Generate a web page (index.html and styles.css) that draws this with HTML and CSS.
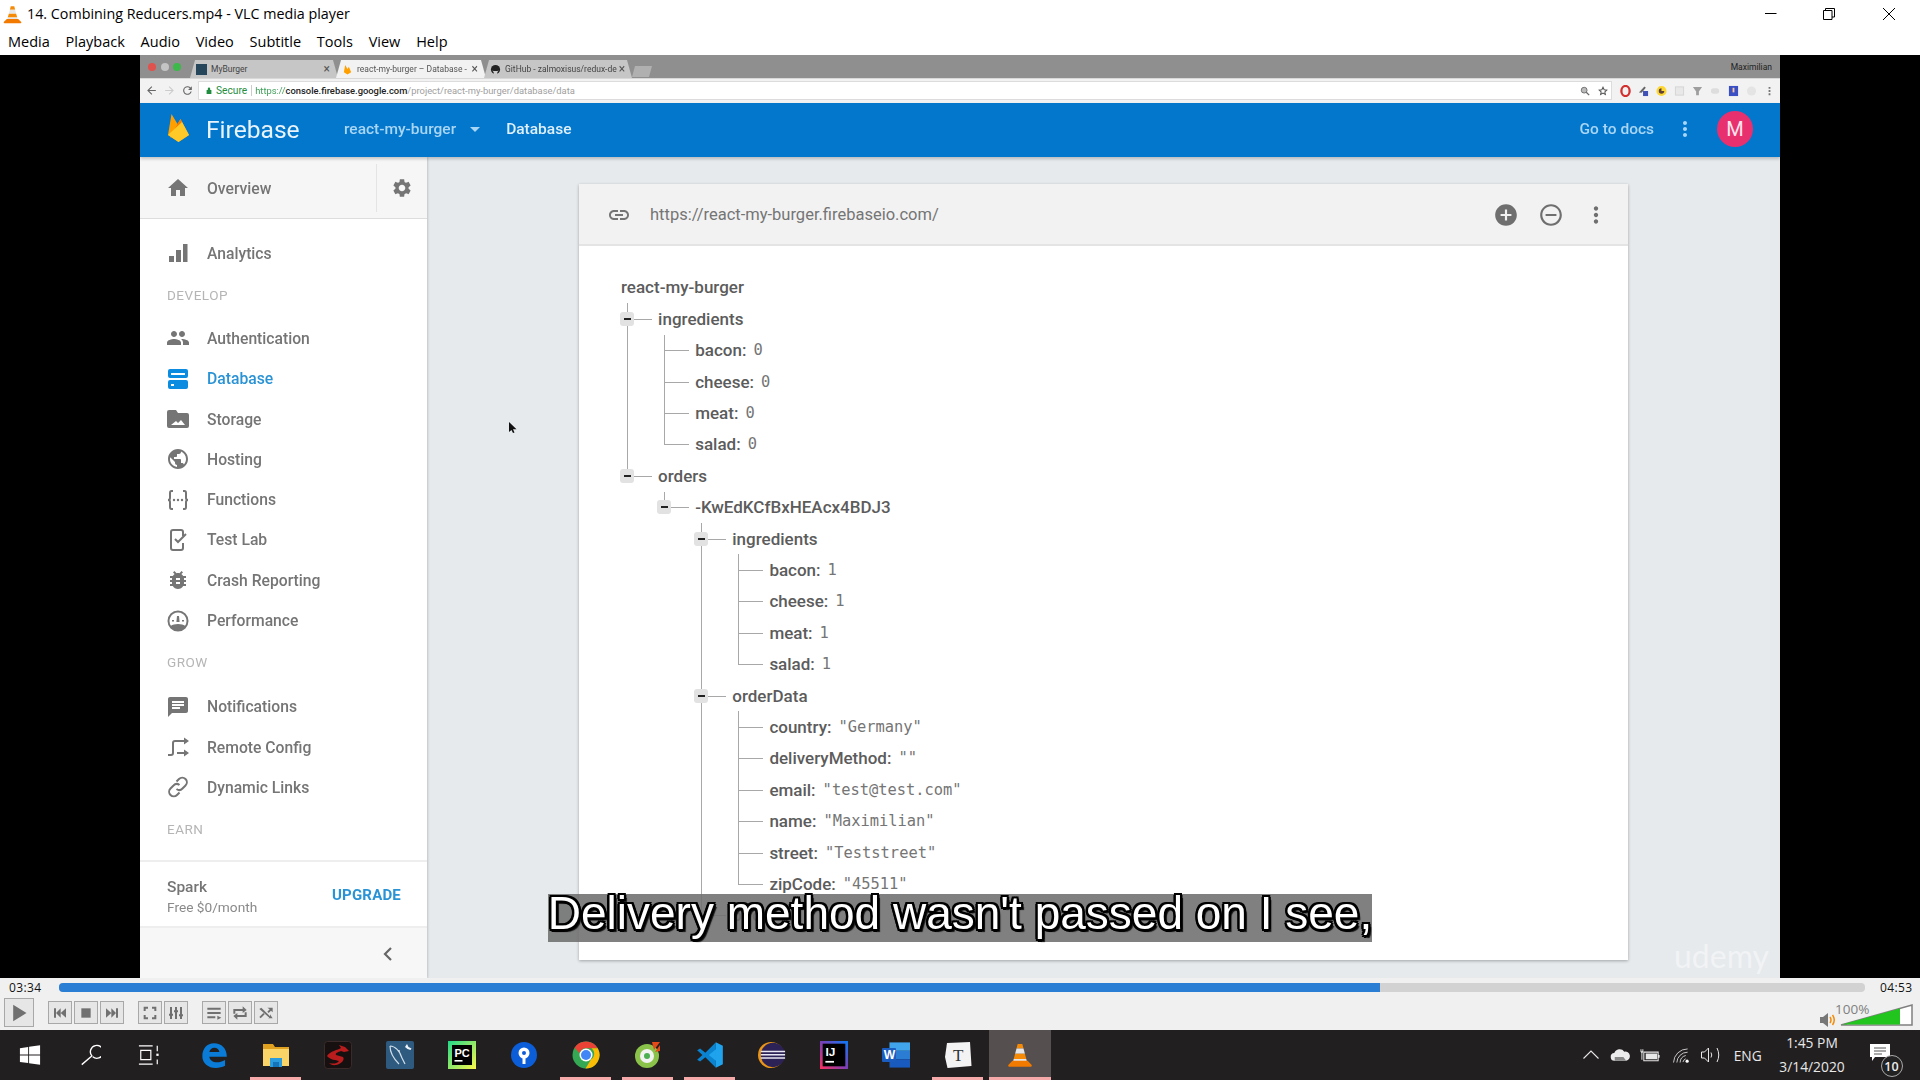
FILE: index.html
```html
<!DOCTYPE html>
<html lang="en">
<head>
<meta charset="utf-8">
<title>14. Combining Reducers.mp4 - VLC media player</title>
<link rel="stylesheet" href="styles.css">
</head>
<body>
<svg class="defs" width="0" height="0" aria-hidden="true">
  <symbol id="i-home" viewBox="0 0 24 24"><path d="M10 20v-6h4v6h5v-8h3L12 3 2 12h3v8z"/></symbol>
  <symbol id="i-gear" viewBox="0 0 24 24"><path d="M19.14 12.94c.04-.3.06-.61.06-.94 0-.32-.02-.64-.07-.94l2.03-1.58c.18-.14.23-.41.12-.61l-1.92-3.32c-.12-.22-.37-.29-.59-.22l-2.39.96c-.5-.38-1.03-.7-1.62-.94l-.36-2.54c-.04-.24-.24-.41-.48-.41h-3.84c-.24 0-.43.17-.47.41l-.36 2.54c-.59.24-1.13.57-1.62.94l-2.39-.96c-.22-.08-.47 0-.59.22L2.74 8.87c-.12.21-.08.47.12.61l2.03 1.58c-.05.3-.09.63-.09.94s.02.64.07.94l-2.03 1.58c-.18.14-.23.41-.12.61l1.92 3.32c.12.22.37.29.59.22l2.39-.96c.5.38 1.03.7 1.62.94l.36 2.54c.05.24.24.41.48.41h3.84c.24 0 .44-.17.47-.41l.36-2.54c.59-.24 1.13-.56 1.62-.94l2.39.96c.22.08.47 0 .59-.22l1.92-3.32c.12-.22.07-.47-.12-.61l-2.01-1.58zM12 15.6c-1.98 0-3.6-1.62-3.6-3.6s1.62-3.6 3.6-3.6 3.6 1.62 3.6 3.6-1.62 3.6-3.6 3.6z"/></symbol>
  <symbol id="i-bars" viewBox="0 0 24 24"><path d="M3 15h5v6H3zM10 9h5v12h-5zM17 3h4.500v18H17z"/></symbol>
  <symbol id="i-people" viewBox="0 0 24 24"><path d="M16 11c1.660 0 2.990-1.340 2.990-3S17.660 5 16 5c-1.660 0-3 1.340-3 3s1.340 3 3 3zm-8 0c1.660 0 2.990-1.340 2.990-3S9.660 5 8 5C6.340 5 5 6.340 5 8s1.340 3 3 3zm0 2c-2.330 0-7 1.170-7 3.500V19h14v-2.500c0-2.330-4.670-3.500-7-3.500zm8 0c-.29 0-.62.02-.97.05 1.160.84 1.970 1.970 1.970 3.450V19h6v-2.500c0-2.330-4.670-3.500-7-3.500z"/></symbol>
  <symbol id="i-db" viewBox="0 0 24 24"><path fill-rule="evenodd" d="M4 2h16a2 2 0 0 1 2 2v5a2 2 0 0 1-2 2H4a2 2 0 0 1-2-2V4a2 2 0 0 1 2-2zm1 4v2h14V6zM4 13h16a2 2 0 0 1 2 2v5a2 2 0 0 1-2 2H4a2 2 0 0 1-2-2v-5a2 2 0 0 1 2-2zm1 4v2h3v-2z"/></symbol>
  <symbol id="i-folder" viewBox="0 0 24 24"><path fill-rule="evenodd" d="M3 3h7l2 3h9a2 2 0 0 1 2 2v11a2 2 0 0 1-2 2H3a2 2 0 0 1-2-2V5a2 2 0 0 1 2-2zm2 15h14l-4-5-3 3-2-2z"/></symbol>
  <symbol id="i-globe" viewBox="0 0 24 24"><path d="M12 2C6.480 2 2 6.480 2 12s4.480 10 10 10 10-4.480 10-10S17.520 2 12 2zm-1 17.930c-3.950-.49-7-3.850-7-7.930 0-.62.08-1.210.21-1.790L9 15v1c0 1.100.9 2 2 2v1.930zm6.900-2.540c-.26-.81-1-1.390-1.900-1.390h-1v-3c0-.55-.45-1-1-1H8v-2h2c.55 0 1-.45 1-1V7h2c1.100 0 2-.9 2-2v-.41c2.930 1.190 5 4.060 5 7.410 0 2.080-.8 3.970-2.100 5.390z"/></symbol>
  <symbol id="i-fn" viewBox="0 0 24 24"><path fill="none" stroke="currentColor" stroke-width="2" d="M7 3H5.500Q4 3 4 5v5q0 2-2 2 2 0 2 2v5q0 2 1.500 2H7M17 3h1.500Q20 3 20 5v5q0 2 2 2-2 0-2 2v5q0 2-1.500 2H17"/><circle cx="8" cy="12" r="1.200"/><circle cx="12" cy="12" r="1.200"/><circle cx="16" cy="12" r="1.200"/></symbol>
  <symbol id="i-lab" viewBox="0 0 24 24"><path fill="none" stroke="currentColor" stroke-width="2" d="M17 8V4a2 2 0 0 0-2-2H7a2 2 0 0 0-2 2v16a2 2 0 0 0 2 2h8a2 2 0 0 0 2-2v-5M9 11l3 3 8-8"/></symbol>
  <symbol id="i-bug" viewBox="0 0 24 24"><path d="M20 8h-2.810c-.45-.78-1.070-1.450-1.820-1.960L17 4.410 15.590 3l-2.170 2.170C12.960 5.060 12.490 5 12 5c-.49 0-.96.06-1.410.17L8.410 3 7 4.410l1.620 1.630C7.880 6.550 7.260 7.220 6.810 8H4v2h2.090c-.05.33-.09.66-.09 1v1H4v2h2v1c0 .34.04.67.09 1H4v2h2.810c1.040 1.790 2.970 3 5.190 3s4.150-1.210 5.190-3H20v-2h-2.090c.05-.33.09-.66.09-1v-1h2v-2h-2v-1c0-.34-.04-.67-.09-1H20V8zm-6 8h-4v-2h4v2zm0-4h-4v-2h4v2z"/></symbol>
  <symbol id="i-gauge" viewBox="0 0 24 24"><path fill-rule="evenodd" d="M12 1.500a10.500 10.500 0 1 0 0 21 10.500 10.500 0 0 0 0-21zm0 2a8.500 8.500 0 0 1 7 13.300c-1.500-1-4-1.800-7-1.800s-5.500.8-7 1.800a8.500 8.500 0 0 1 7-13.300z"/><path d="M11 7h2l.6 6h-3.200zM6 11h2v1.500H6zM16 11h2v1.500h-2z"/></symbol>
  <symbol id="i-chat" viewBox="0 0 24 24"><path d="M20 2H4c-1.100 0-1.990.9-1.990 2L2 22l4-4h14c1.100 0 2-.9 2-2V4c0-1.100-.9-2-2-2zM6 9h12v2H6V9zm8 5H6v-2h8v2zm4-6H6V6h12v2z"/></symbol>
  <symbol id="i-remote" viewBox="0 0 24 24"><path fill="none" stroke="currentColor" stroke-width="2" d="M2 20h3q2 0 2-2V8q0-2 2-2h10M11 18h9"/><path d="M18 2.500 23 6l-5 3.500zM18 14.500l5 3.500-5 3.500z"/></symbol>
  <symbol id="i-chain" viewBox="0 0 24 24"><path fill="none" stroke="currentColor" stroke-width="2" d="M10.500 6.500 13 4a4.500 4.500 0 0 1 6.500 6.500l-3 3a4.500 4.500 0 0 1-6 .5M13.500 17.500 11 20a4.500 4.500 0 0 1-6.500-6.500l3-3a4.500 4.500 0 0 1 6-.5"/></symbol>
  <symbol id="i-link" viewBox="0 0 24 24"><path d="M3.900 12c0-1.710 1.390-3.100 3.100-3.100h4V7H7c-2.760 0-5 2.240-5 5s2.240 5 5 5h4v-1.900H7c-1.710 0-3.100-1.390-3.100-3.100zM8 13h8v-2H8v2zm9-6h-4v1.900h4c1.710 0 3.100 1.390 3.100 3.100s-1.390 3.100-3.100 3.100h-4V17h4c2.760 0 5-2.240 5-5s-2.240-5-5-5z"/></symbol>
  <symbol id="i-plus" viewBox="0 0 24 24"><path d="M12 2C6.480 2 2 6.480 2 12s4.480 10 10 10 10-4.480 10-10S17.520 2 12 2zm5 11h-4v4h-2v-4H7v-2h4V7h2v4h4v2z"/></symbol>
  <symbol id="i-minus" viewBox="0 0 24 24"><path d="M7 11v2h10v-2H7zm5-9C6.480 2 2 6.480 2 12s4.480 10 10 10 10-4.480 10-10S17.520 2 12 2zm0 18c-4.410 0-8-3.590-8-8s3.590-8 8-8 8 3.590 8 8-3.590 8-8 8z"/></symbol>
  <symbol id="i-more" viewBox="0 0 24 24"><path d="M12 8c1.100 0 2-.9 2-2s-.9-2-2-2-2 .9-2 2 .9 2 2 2zm0 2c-1.100 0-2 .9-2 2s.9 2 2 2 2-.9 2-2-.9-2-2-2zm0 6c-1.100 0-2 .9-2 2s.9 2 2 2 2-.9 2-2-.9-2-2-2z"/></symbol>
  <symbol id="i-vlc" viewBox="0 0 24 24"><path fill="#f58a07" d="M10 2.500h4l1 4H9z"/><path fill="#e6e6e6" d="M9 6.500h6l1.200 4.500H7.800z"/><path fill="#f58a07" d="M7.800 11h8.400l1.200 4.500H6.600z"/><path fill="#e6e6e6" d="M6.600 15.500h10.800l.5 2H6.100z"/><path fill="#f27a00" d="M5.500 17h13l3.500 3.500q.5 1.500-1 1.500H3q-1.500 0-1-1.500z"/></symbol>
</svg>

<header class="titlebar">
  <svg class="title-icon"><use href="#i-vlc"/></svg>
  <span class="title-text">14. Combining Reducers.mp4 - VLC media player</span>
  <div class="winctl">
    <svg class="wc" viewBox="0 0 12 12"><path d="M0 5.500h11.500" stroke="#000" fill="none"/></svg>
    <svg class="wc" viewBox="0 0 12 12"><path d="M.5 2.500h8.500v9H.5zM2.500 2.500V.5h9v8.500H9" stroke="#000" fill="none"/></svg>
    <svg class="wc" viewBox="0 0 12 12"><path d="M0 0l12 12M12 0L0 12" stroke="#000" fill="none"/></svg>
  </div>
</header>
<nav class="menubar">
  <span>Media</span><span>Playback</span><span>Audio</span><span>Video</span><span>Subtitle</span><span>Tools</span><span>View</span><span>Help</span>
</nav>

<main class="video">
  <div class="frame">
    <div class="screen">
      <div class="tabbar">
        <div class="dots"><i class="dot red"></i><i class="dot grey"></i><i class="dot green"></i></div>
        <div class="tab tab-a"><i class="fav-burger"></i><span class="tab-label">MyBurger</span><span class="tab-x">×</span></div>
        <div class="tab tab-active"><svg class="fav" viewBox="0 0 24 24"><path fill="#ffa000" d="M4 18 7 2l5 9 3-5 5 12-8 5z"/></svg><span class="tab-label">react-my-burger – Database -</span><span class="tab-x">×</span></div>
        <div class="tab tab-c"><svg class="fav" viewBox="0 0 24 24"><circle cx="12" cy="12" r="10" fill="#222"/><path fill="#ccc" d="M8 22v-4l-3-4 3 1 8 0 3-1-3 4v4z"/></svg><span class="tab-label">GitHub - zalmoxisus/redux-de</span><span class="tab-x">×</span></div>
        <div class="tab-new"></div>
        <span class="profile">Maximilian</span>
      </div>
      <div class="toolbar">
        <svg class="nav-ic" viewBox="0 0 24 24"><path d="M20 11H7.800l5.600-5.600L12 4l-8 8 8 8 1.400-1.400L7.800 13H20z"/></svg>
        <svg class="nav-ic nav-off" viewBox="0 0 24 24"><path d="M4 11h12.200l-5.600-5.600L12 4l8 8-8 8-1.400-1.400 5.600-5.600H4z"/></svg>
        <svg class="nav-ic" viewBox="0 0 24 24"><path d="M17.650 6.350A8 8 0 1 0 19.730 14h-2.080A6 6 0 1 1 12 6c1.660 0 3.140.69 4.220 1.780L13 11h7V4z"/></svg>
        <div class="omni">
          <svg class="lock" viewBox="0 0 10 12"><path d="M1 5h8v7H1zM3 5V3a2 2 0 0 1 4 0v2" fill="#1e8e3e"/></svg>
          <span class="secure">Secure</span><i class="omni-sep"></i>
          <span class="url-scheme">https://</span><span class="url-host">console.firebase.google.com</span><span class="url-path">/project/react-my-burger/database/data</span>
          <svg class="omni-ic omni-right" viewBox="0 0 24 24"><circle cx="10" cy="10" r="7" fill="#bbb" stroke="#666" stroke-width="2"/><path d="M15 15l7 7" stroke="#666" stroke-width="3"/></svg>
          <svg class="omni-ic" viewBox="0 0 24 24"><path fill="none" stroke="#555" stroke-width="2.500" d="M12 3l2.800 6 6.200.7-4.600 4.300 1.300 6.500L12 17l-5.700 3.500L7.600 14 3 9.700 9.200 9z"/></svg>
        </div>
        <div class="exts">
          <svg class="ext" viewBox="0 0 24 24"><ellipse cx="12" cy="12" rx="9" ry="11" fill="none" stroke="#d32f2f" stroke-width="5"/></svg>
          <svg class="ext" viewBox="0 0 24 24"><path fill="#666" d="M2 15 14 2l3 3L8 16z"/><rect x="11" y="12" width="11" height="11" fill="#3f51b5"/></svg>
          <svg class="ext" viewBox="0 0 24 24"><circle cx="12" cy="12" r="11" fill="#fdd835"/><path fill="#5d4037" d="M12 6a6 6 0 1 0 6 6h-6z"/></svg>
          <svg class="ext" viewBox="0 0 24 24"><rect x="3" y="3" width="18" height="18" fill="#e8e8e8" stroke="#d4d4d4" stroke-width="2"/></svg>
          <svg class="ext" viewBox="0 0 24 24"><path fill="#9e9e9e" d="M2 3h20l-7 10v8h-6v-8z"/></svg>
          <svg class="ext" viewBox="0 0 24 24"><rect x="2" y="6" width="18" height="12" rx="6" fill="#ddd"/></svg>
          <svg class="ext" viewBox="0 0 24 24"><rect x="2" y="1" width="20" height="22" fill="#3b4fc4"/><rect x="10" y="5" width="4" height="10" fill="#f5c6a0"/></svg>
          <svg class="ext" viewBox="0 0 24 24"><circle cx="12" cy="12" r="10" fill="#e4e4e4"/></svg>
          <svg class="ext" viewBox="0 0 24 24"><path fill="#777" d="M10 3h4v4h-4zM10 10h4v4h-4zM10 17h4v4h-4z"/></svg>
        </div>
      </div>

      <div class="fbbar">
        <svg class="fb-logo" viewBox="0 0 21 28"><path fill="#ffa000" d="M0 21 3.500 0 9.500 10 12.500 5 21 21 10.500 28z"/><path fill="#f57c00" d="M9.500 10 12.500 5 16 14 2 24z"/><path fill="#ffca28" d="M0 21 14 8 21 21 10.500 28z"/></svg>
        <span class="fb-name">Firebase</span>
        <span class="fb-project">react-my-burger</span>
        <i class="fb-caret"></i>
        <span class="fb-section">Database</span>
        <span class="fb-docs">Go to docs</span>
        <svg class="fb-more"><use href="#i-more"/></svg>
        <span class="avatar">M</span>
      </div>

      <div class="fbbody">
        <aside class="side">
          <div class="overview">
            <svg class="ic"><use href="#i-home"/></svg><span class="ov-label">Overview</span>
            <span class="ov-gear"><svg class="gear"><use href="#i-gear"/></svg></span>
          </div>
          <div class="navlist">
            <div class="item"><svg class="ic"><use href="#i-bars"/></svg>Analytics</div>
            <div class="sect sect-dev">DEVELOP</div>
            <div class="item"><svg class="ic"><use href="#i-people"/></svg>Authentication</div>
            <div class="item item-on"><svg class="ic"><use href="#i-db"/></svg>Database</div>
            <div class="item"><svg class="ic"><use href="#i-folder"/></svg>Storage</div>
            <div class="item"><svg class="ic"><use href="#i-globe"/></svg>Hosting</div>
            <div class="item"><svg class="ic"><use href="#i-fn"/></svg>Functions</div>
            <div class="item"><svg class="ic"><use href="#i-lab"/></svg>Test Lab</div>
            <div class="item"><svg class="ic"><use href="#i-bug"/></svg>Crash Reporting</div>
            <div class="item"><svg class="ic"><use href="#i-gauge"/></svg>Performance</div>
            <div class="sect sect-grow">GROW</div>
            <div class="item"><svg class="ic"><use href="#i-chat"/></svg>Notifications</div>
            <div class="item"><svg class="ic"><use href="#i-remote"/></svg>Remote Config</div>
            <div class="item"><svg class="ic"><use href="#i-chain"/></svg>Dynamic Links</div>
            <div class="sect sect-earn">EARN</div>
          </div>
          <div class="plan">
            <div class="plan-text"><span class="plan-name">Spark</span><span class="plan-price">Free $0/month</span></div>
            <span class="upgrade">UPGRADE</span>
          </div>
          <div class="collapse"><svg class="chev" viewBox="0 0 12 16"><path d="M9 2 3 8l6 6" fill="none" stroke="#666" stroke-width="2.200"/></svg></div>
        </aside>

        <section class="content">
          <div class="card">
            <div class="card-head">
              <svg class="ch-link"><use href="#i-link"/></svg>
              <span class="ch-url">https://react-my-burger.firebaseio.com/</span>
              <svg class="ch-ic ch-first"><use href="#i-plus"/></svg>
              <svg class="ch-ic"><use href="#i-minus"/></svg>
              <svg class="ch-ic"><use href="#i-more"/></svg>
            </div>
            <div class="card-body">
              <ul class="tree">
                <li class="root"><div class="row"><b>react-my-burger</b></div>
                  <ul>
                    <li><div class="row"><i class="tog"></i><b>ingredients</b></div>
                      <ul>
                        <li><div class="row"><b>bacon:</b><code>0</code></div></li>
                        <li><div class="row"><b>cheese:</b><code>0</code></div></li>
                        <li><div class="row"><b>meat:</b><code>0</code></div></li>
                        <li><div class="row"><b>salad:</b><code>0</code></div></li>
                      </ul>
                    </li>
                    <li><div class="row"><i class="tog"></i><b>orders</b></div>
                      <ul>
                        <li><div class="row"><i class="tog"></i><b>-KwEdKCfBxHEAcx4BDJ3</b></div>
                          <ul>
                            <li><div class="row"><i class="tog"></i><b>ingredients</b></div>
                              <ul>
                                <li><div class="row"><b>bacon:</b><code>1</code></div></li>
                                <li><div class="row"><b>cheese:</b><code>1</code></div></li>
                                <li><div class="row"><b>meat:</b><code>1</code></div></li>
                                <li><div class="row"><b>salad:</b><code>1</code></div></li>
                              </ul>
                            </li>
                            <li><div class="row"><i class="tog"></i><b>orderData</b></div>
                              <ul>
                                <li><div class="row"><b>country:</b><code>"Germany"</code></div></li>
                                <li><div class="row"><b>deliveryMethod:</b><code>""</code></div></li>
                                <li><div class="row"><b>email:</b><code>"test@test.com"</code></div></li>
                                <li><div class="row"><b>name:</b><code>"Maximilian"</code></div></li>
                                <li><div class="row"><b>street:</b><code>"Teststreet"</code></div></li>
                                <li><div class="row"><b>zipCode:</b><code>"45511"</code></div></li>
                              </ul>
                            </li>
                            <li><div class="row"><b>price:</b><code>4</code></div></li>
                          </ul>
                        </li>
                      </ul>
                    </li>
                  </ul>
                </li>
              </ul>
            </div>
          </div>
        </section>
      </div>
      <svg class="cursor" viewBox="0 0 8 12"><path d="M0 0v10l2.500-2L4 11l1.500-.6L4 7.300h3.500z" fill="#111"/></svg>
      <span class="watermark">udemy</span>
    </div>
    <div class="subtitle"><span>Delivery method wasn't passed on I see,</span></div>
  </div>
</main>

<div class="seek">
  <span class="time time-l">03:34</span>
  <div class="track"><div class="fill"></div></div>
  <span class="time time-r">04:53</span>
</div>

<div class="controls">
  <button class="btn btn-play"><svg viewBox="0 0 24 24"><path d="M5 2l16 10L5 22z"/></svg></button>
  <div class="grp">
    <button class="btn"><svg viewBox="0 0 24 24"><path d="M3 5h3v14H3zM13 5v14l-7-7zM21 5v14l-8-7z"/></svg></button>
    <button class="btn"><svg viewBox="0 0 24 24"><path d="M5 5h14v14H5z"/></svg></button>
    <button class="btn"><svg viewBox="0 0 24 24"><path d="M3 5v14l8-7zM11 5v14l7-7zM18 5h3v14h-3z"/></svg></button>
  </div>
  <div class="grp">
    <button class="btn"><svg viewBox="0 0 24 24"><path fill="none" stroke="#707070" stroke-width="3" d="M9 4H4v5M15 4h5v5M9 20H4v-5M15 20h5v-5"/></svg></button>
    <button class="btn"><svg viewBox="0 0 24 24"><path d="M3 3h3v18H3zM10.500 3h3v18h-3zM18 3h3v18h-3zM1.500 13h6v3h-6zM9 8h6v3H9zM16.500 14h6v3h-6z"/></svg></button>
  </div>
  <div class="grp">
    <button class="btn"><svg viewBox="0 0 24 24"><path d="M2 4h20v3H2zM2 10.500h20v3H2zM2 17h12v3H2zM17 16l6 3-6 3z"/></svg></button>
    <button class="btn"><svg viewBox="0 0 24 24"><path d="M2 13V6h14V2l6 5.500L16 12V9H5v4zM22 11v7H8v4l-6-5.500L8 12v3h11v-4z"/></svg></button>
    <button class="btn"><svg viewBox="0 0 24 24"><path d="M2 6l3-2 13 13v-3l4 6h-7l2-1L2 6zM14 4h8v7l-2.500-2.500-3.500 3.500-2-2 3.500-3.500zM2 18l6-6 2 2-6 6z"/></svg></button>
  </div>
  <div class="volume">
    <svg class="vol-ic" viewBox="0 0 16 16"><path fill="#777" d="M0 5h3l5-4v14l-5-4H0z"/><path fill="none" stroke="#f58a07" stroke-width="1.500" d="M10 5q2 3 0 6M12.500 3q3.500 5 0 10"/></svg>
    <svg class="vol-bar" viewBox="0 0 74 24">
      <path d="M1 22 72 2v20z" fill="#fff" stroke="#808080" stroke-width="1.500"/>
      <path d="M2 21.500 60 5.500v16z" fill="#22c41e"/>
      <text class="vol-text" x="-5" y="11">100%</text>
    </svg>
  </div>
</div>

<footer class="taskbar">
  <div class="sys sys-win"><svg viewBox="0 0 24 24"><path fill="#fff" d="M1 4.500l9-1.300V11.500H1zM11 3l12-1.700V11.500H11zM1 12.500h9v8.300l-9-1.300zM11 12.500h12V22.700L11 21z"/></svg></div>
  <div class="sys sys-search"><svg viewBox="0 0 24 24"><path fill="none" stroke="#fff" stroke-width="1.500" d="M15 14a7 7 0 1 0-1-1L3 22.500"/></svg></div>
  <div class="sys sys-view"><svg viewBox="0 0 24 24"><path fill="none" stroke="#fff" stroke-width="1.300" d="M1 2h15M1 22h15M3 7h11v10H3zM21 2v6M21 17v5"/><path fill="#fff" d="M20 10.500h2.500v2.500H20z"/></svg></div>
  <div class="apps">
    <div class="app"><svg viewBox="0 0 24 24"><path fill="#0a7bd6" d="M12 2c6.500 0 11 4.500 11 11.500H8c.3 3 3 4.800 6.500 4.800 2.300 0 4.500-.5 7-2v5c-2.400 1.300-5 1.800-8 1.800C7 23 2 19 2 13 2 6.500 6 2 12 2zm4.600 7.500c-.2-2.300-2-3.800-4.300-3.800-2.200 0-3.900 1.500-4.300 3.800z"/></svg></div>
    <div class="app app-on"><svg viewBox="0 0 28 28"><path fill="#e0a020" d="M1 3h10l2 3h14v6H1z"/><path fill="#fbd468" d="M1 8h26v17H1z"/><path fill="#2a9bdc" d="M8 17h12v9h-3v-5h-6v5H8z"/><path fill="#1573b8" d="M11 21h6v5h-6z"/></svg></div>
    <div class="app"><svg viewBox="0 0 28 28"><rect x=".5" y=".5" width="27" height="27" rx="3" fill="#161010" stroke="#3a2a2a"/><path fill="#b91c1c" d="M3 15c3-5 11-6 14-8l-2-3 6 2 4 4-5 1-3-1c-3 1-6 2-5 4l7 2c2 2-1 7-7 8-3 .5-6-.5-7-2 3 1 8 1 10-2-3-1-9-1-12-5z"/></svg></div>
    <div class="app"><svg viewBox="0 0 28 28"><rect width="28" height="28" rx="2" fill="#2e5a80"/><path fill="none" stroke="#cfdde8" stroke-width="1.200" d="M4 5c5 0 10 5 12 12l3 6M4 5c0 6 3 12 9 18M16 17c-1-3-3-5-3-8"/><path fill="#eef3f7" d="M21 3l1.500 3 3 1.500-1 1.500-3-1-2.500-2z"/></svg></div>
    <div class="app"><svg viewBox="0 0 28 28"><defs><linearGradient id="pc-g" x1="0" y1="0" x2="1" y2="1"><stop offset="0" stop-color="#21d789"/><stop offset="1" stop-color="#fcf84a"/></linearGradient></defs><rect width="28" height="28" fill="url(#pc-g)"/><rect x="4" y="4" width="20" height="20" fill="#000"/><text class="logo-txt" x="6.500" y="15.500">PC</text><rect x="6.500" y="19" width="8" height="1.600" fill="#fff"/></svg></div>
    <div class="app"><svg viewBox="0 0 28 28"><circle cx="14" cy="14" r="13" fill="#0b5ed7"/><circle cx="14" cy="12" r="5.500" fill="#fff"/><circle cx="14" cy="12" r="2" fill="#0b5ed7"/><path fill="#fff" d="M12.500 16h3v7h-3z"/></svg></div>
    <div class="app app-on"><svg viewBox="0 0 28 28"><circle cx="14" cy="14" r="13.500" fill="#34a853"/><path fill="#ea4335" d="M14 .5a13.500 13.500 0 0 1 11.700 6.800H14a6.800 6.800 0 0 0-6.500 4.700L2.600 6.800A13.500 13.500 0 0 1 14 .5z"/><path fill="#fbbc05" d="M25.700 7.300A13.500 13.500 0 0 1 13.500 27.500l5.500-9a6.800 6.800 0 0 0 .5-11.200z"/><circle cx="14" cy="14" r="6.500" fill="#fff"/><circle cx="14" cy="14" r="5" fill="#4285f4"/></svg></div>
    <div class="app app-on"><svg viewBox="0 0 28 28"><circle cx="13" cy="15" r="12" fill="#8bc34a"/><circle cx="13" cy="15" r="7" fill="#f2f2f2"/><circle cx="13" cy="15" r="3" fill="#4caf50"/><path fill="#e64a19" d="M18 1h8l-6 8zM26 4v6l-5 1z"/></svg></div>
    <div class="app app-on"><svg viewBox="0 0 24 24"><path fill="#0a84d0" d="M17 1 8 10 3.500 6.500 1 8l4.500 4L1 16l2.500 1.500L8 14l9 9z"/><path fill="#1fa3ec" d="M17 1l6 3v16l-6 3zm0 6-6 5 6 5z"/></svg></div>
    <div class="app"><svg viewBox="0 0 30 28"><circle cx="14" cy="14" r="14" fill="#e89518"/><circle cx="16" cy="14" r="13" fill="#2c2255"/><path fill="#e8e8f4" d="M3 9.500h26V11H3zM3 13h26v1.500H3zM3 16.500h26V18H3z"/></svg></div>
    <div class="app"><svg viewBox="0 0 26 26"><defs><linearGradient id="ij-g" x1="0" y1="1" x2="1" y2="0"><stop offset="0" stop-color="#fe315d"/><stop offset=".5" stop-color="#7b3fb5"/><stop offset="1" stop-color="#087cfa"/></linearGradient></defs><rect width="26" height="26" fill="url(#ij-g)"/><rect x="2.500" y="2.500" width="21" height="21" fill="#000"/><text class="logo-txt" x="5" y="13.500">IJ</text><rect x="5" y="18.500" width="8" height="1.600" fill="#fff"/></svg></div>
    <div class="app"><svg viewBox="0 0 30 27"><path fill="#41a5ee" d="M8 0h22v9H8z"/><path fill="#2b7cd3" d="M8 9h22v9H8z"/><path fill="#185abd" d="M8 18h22v9H8z"/><rect y="6" width="15" height="15" rx="1" fill="#1a5cc0"/><text class="logo-w" x="1.800" y="17.500">W</text></svg></div>
    <div class="app app-on"><svg viewBox="0 0 28 28"><path fill="#f3f3f3" d="M3 2l23-1 1.500 24-24 2L1 16z"/><text class="logo-t" x="9" y="20">T</text></svg></div>
    <div class="app app-on app-cur"><svg class="vlc-big"><use href="#i-vlc"/></svg></div>
  </div>
  <div class="tray">
    <div class="tr tr-chev"><svg viewBox="0 0 16 10"><path d="M.5 8.500 8 1l7.500 7.500" fill="none" stroke="#e8e8e8" stroke-width="1.100"/></svg></div>
    <div class="tr tr-cloud"><svg viewBox="0 0 22 14"><path fill="#ececec" d="M5 13a4 4 0 0 1-.5-8A6 6 0 0 1 15 3.500 4.800 4.800 0 0 1 17 13z"/><path fill="#888" d="M5 9h9l3 4H5z"/></svg></div>
    <div class="tr tr-batt"><svg viewBox="0 0 22 14"><path fill="none" stroke="#e8e8e8" stroke-width="1.100" d="M4 4h15v9H4zM20 7v3"/><path fill="#e8e8e8" d="M6 5.500h12v6H6zM.5 1h1v2h1V1h1v2.500L2.500 5v7h-1V5L.5 3.500z"/></svg></div>
    <div class="tr tr-wifi"><svg viewBox="0 0 18 16"><path fill="none" stroke="#d0d0d0" stroke-width="1" d="M.5 15.500A15 15 0 0 1 15.500 1M4 15.500A11.500 11.500 0 0 1 15.500 4.500M7.500 15.500a8 8 0 0 1 6-7.500M10.500 15a5 5 0 0 1 3-3.500"/><circle cx="15" cy="14" r="1.700" fill="#fff"/></svg></div>
    <div class="tr tr-vol"><svg viewBox="0 0 20 16"><path fill="none" stroke="#e8e8e8" stroke-width="1" d="M.5 5h3l4-4v14l-4-4h-3zM10 5.500q1.500 2.500 0 5M16 1q3.500 7 0 14"/></svg></div>
    <div class="tr tr-lang">ENG</div>
    <div class="tr tr-clock"><span>1:45 PM</span><span>3/14/2020</span></div>
    <div class="tr tr-notif">
      <svg class="notif-ic" viewBox="0 0 20 18"><path fill="#fff" d="M0 0h20v13H5l-3 4v-4H0z"/><path stroke="#555" stroke-width="1" d="M4 4h12M4 7h12M4 10h8"/></svg>
      <span class="badge">10</span>
    </div>
  </div>
</footer>
</body>
</html>
```
FILE: styles.css
```css
* { box-sizing: border-box; }
html, body { margin: 0; padding: 0; height: 100%; }
body {
  width: 1920px; height: 1080px; overflow: hidden;
  display: flex; flex-direction: column;
  font-family: "Open Sans", "Noto Sans", sans-serif;
  color: #000; background: #f0f0f0;
}
.defs { position: absolute; }

/* window chrome */
.titlebar { height: 27px; flex: none; background: #fff; display: flex; align-items: center; padding: 1px 0 0 2px; }
.title-icon { width: 21px; height: 21px; flex: none; }
.title-text { margin-left: 4px; font-size: 14.300px; line-height: 20px; }
.winctl { margin-left: auto; display: flex; margin-top: -1px; }
.wc { width: 12px; height: 12px; }
.wc:nth-child(1) { margin-right: 46px; }
.wc:nth-child(2) { margin-right: 48px; }
.wc:nth-child(3) { margin-right: 25px; }
.menubar { height: 28px; flex: none; background: #fff; display: flex; align-items: center; gap: 15.800px; padding-left: 8px; font-size: 14.500px; }

/* video */
.video { flex: 1; min-height: 0; background: #000; display: flex; justify-content: center; }
.frame { width: 1640px; height: 923px; position: relative; }
.screen { width: 100%; height: 100%; display: flex; flex-direction: column; filter: blur(.45px); position: relative; font-family: Roboto, sans-serif; overflow: hidden; }

/* browser chrome */
.tabbar { height: 23px; flex: none; background: #8f8f8f; display: flex; align-items: flex-end; padding-left: 8px; }
.dots { display: flex; gap: 4.500px; align-self: center; margin-right: 9px; margin-top: 1px; }
.dot { width: 8px; height: 8px; border-radius: 50%; display: block; }
.red { background: #e0524d; } .grey { background: #c4c4c4; } .green { background: #3cb94a; }
.tab { height: 18px; display: flex; align-items: center; padding: 0 8px 0 6px; font-size: 8.500px; color: #444; background: #c6c6c6; clip-path: polygon(5px 0, calc(100% - 5px) 0, 100% 100%, 0 100%); }
.tab-a { width: 148px; }
.tab-active { width: 150px; background: #f2f2f2; color: #555; margin-left: -2px; }
.tab-c { width: 148px; margin-left: -2px; }
.tab-label { flex: 1; margin-left: 4px; white-space: nowrap; }
.tab-x { font-size: 12px; color: #555; margin-left: 2px; }
.fav { width: 11px; height: 11px; flex: none; }
.fav-burger { width: 11px; height: 11px; background: #26465c; display: block; flex: none; }
.tab-new { width: 20px; height: 11px; background: #b0b0b0; margin-bottom: 1px; clip-path: polygon(3px 0, 100% 0, calc(100% - 3px) 100%, 0 100%); }
.profile { margin-left: auto; align-self: center; padding-right: 8px; font-size: 8.500px; color: #222; }
.toolbar { height: 24.500px; flex: none; background: #f2f2f2; display: flex; align-items: center; padding-left: 5px; border-top: 1px solid #d8d8d8; }
.nav-ic { width: 13px; height: 13px; fill: #666; margin-right: 5px; flex: none; }
.nav-off { fill: #ccc; }
.omni { width: 1414px; margin-left: -1px; height: 19px; background: #fff; border: 1px solid #dcdcdc; display: flex; align-items: center; padding-left: 7px; font-size: 9.400px; flex: none; }
.lock { width: 6px; height: 9px; flex: none; }
.secure { color: #1e8e3e; margin-left: 4px; font-size: 10.200px; }
.omni-sep { width: 1px; height: 11px; background: #ccc; margin: 0 3px 0 4px; }
.url-scheme { color: #1e8e3e; opacity: .85; }
.url-host { color: #222; font-weight: 500; }
.url-path { color: #9e9e9e; }
.omni-ic { width: 10px; height: 10px; margin-right: 8px; flex: none; }
.omni-ic:last-child { margin-right: 3px; }
.omni-right { margin-left: auto; }
.exts { display: flex; align-items: center; padding-left: 8px; gap: 7px; }
.ext { width: 11px; height: 12px; flex: none; }

/* firebase header */
.fbbar { height: 54.500px; flex: none; background: #0277cc; display: flex; align-items: center; padding: 0 0 1px 28px; color: #fff; box-shadow: 0 2px 3px rgba(0,0,0,.2); z-index: 2; position: relative; }
.fb-logo { width: 21px; height: 28px; flex: none; margin-bottom: 2px; }
.fb-name { font-size: 24.600px; margin-left: 17px; width: 138px; color: #e9f4fc; }
.fb-project { font-size: 15.500px; font-weight: 500; color: #a9d6f5; }
.fb-caret { width: 0; height: 0; border: 5px solid transparent; border-top-color: #a9d6f5; border-bottom: 0; margin-left: 14px; }
.fb-section { font-size: 15.500px; font-weight: 500; color: #dff0fb; margin-left: 26px; }
.fb-docs { font-size: 15.500px; font-weight: 500; color: #a9d6f5; margin-left: auto; }
.fb-more { width: 24px; height: 24px; fill: #a9d6f5; margin-left: 19px; }
.avatar { width: 36px; height: 36px; border-radius: 50%; background: #e8306f; color: #fde6ee; display: flex; align-items: center; justify-content: center; font-size: 20px; margin: 0 27px 0 20px; }

/* firebase body */
.fbbody { flex: 1; min-height: 0; display: flex; }
.side { width: 287px; flex: none; background: #fff; display: flex; flex-direction: column; box-shadow: 1px 0 2px rgba(0,0,0,.16); z-index: 1; position: relative; font-size: 15.700px; font-weight: 500; color: #757575; }
.overview { height: 62px; flex: none; background: #f6f6f6; border-bottom: 1px solid #ddd; display: flex; align-items: center; padding: 1px 0 0 27px; }
.ic { width: 24px; height: 24px; flex: none; fill: #757575; color: #757575; margin: 0 17px 0 -1px; }
.ov-label { flex: 1; }
.ov-gear { height: 48px; width: 51px; border-left: 1px solid #e4e4e4; display: flex; align-items: center; justify-content: center; }
.gear { width: 22px; height: 22px; fill: #757575; }
.navlist { flex: 1; padding-top: 14px; }
.item { height: 40.300px; display: flex; align-items: center; padding-left: 27px; white-space: nowrap; }
.item-on { color: #2a93d5; }
.item-on .ic { fill: #0c8ce0; color: #0c8ce0; }
.sect { padding-left: 27px; font-size: 13.500px; font-weight: 400; letter-spacing: .5px; color: #b5b5b5; display: flex; align-items: center; }
.sect-dev { height: 45px; padding-bottom: 2px; }
.sect-grow { height: 46px; padding-bottom: 4px; }
.sect-earn { height: 44px; padding-bottom: 2px; }
.plan { height: 68px; flex: none; border-top: 2px solid #eee; border-bottom: 2px solid #eee; display: flex; align-items: center; justify-content: space-between; padding: 5px 26px 0 27px; }
.plan-text { display: flex; flex-direction: column; }
.plan-name { font-size: 15.500px; line-height: 20px; }
.plan-price { font-size: 13.700px; font-weight: 400; line-height: 20px; color: #8a8a8a; }
.upgrade { font-size: 15px; font-weight: 700; color: #2a93d5; letter-spacing: .2px; margin-bottom: 3px; }
.collapse { height: 50px; flex: none; background: #f7f7f7; display: flex; align-items: center; justify-content: flex-end; padding: 2px 33px 0 0; }
.chev { width: 12px; height: 16px; }

.content { flex: 1; background: #e6eaed; display: flex; justify-content: center; padding: 27px 0 18px; min-width: 0; }
.card { width: 1049px; background: #fff; box-shadow: 0 1px 3px rgba(0,0,0,.3); display: flex; flex-direction: column; }
.card-head { height: 62px; flex: none; background: #f2f2f2; border-bottom: 2px solid #e4e4e4; display: flex; align-items: center; padding: 1px 19px 0 28px; }
.ch-link { width: 24px; height: 24px; fill: #757575; flex: none; }
.ch-url { margin-left: 19px; font-size: 16.500px; color: #757575; flex: 1; }
.ch-ic { width: 26px; height: 26px; fill: #6f6f6f; margin-left: 19px; flex: none; }
.card-body { flex: 1; min-height: 0; overflow: hidden; padding: 25.800px 0 0 42px; }

/* data tree */
.tree, .tree ul { list-style: none; margin: 0; padding: 0; }
.tree ul { padding-left: 37.100px; }
.tree li { position: relative; }
.tree li::before { content: ""; position: absolute; left: -31px; top: 0; bottom: 0; border-left: 1px solid #a8a8a8; }
.tree li:last-child::before { bottom: auto; height: 16px; }
.tree .root::before { display: none; }
.row { height: 31.400px; display: flex; align-items: center; gap: 7px; white-space: nowrap; font-size: 17px; color: #5c5c5c; }
.row b { font-weight: 500; }
.row code { font-family: "DejaVu Sans Mono", monospace; font-size: 15.400px; color: #757575; }
.tree li:not(.root) > .row::before { content: ""; position: absolute; left: -31px; width: 25px; top: 15.700px; border-top: 1px solid #a8a8a8; }
.tog { position: absolute; left: -38px; top: 8.700px; width: 14px; height: 14px; background: #e2e2e2; border-radius: 3px; z-index: 1; }
.tog::after { content: ""; position: absolute; left: 3.500px; top: 6px; width: 7px; height: 2px; background: #222; }

.cursor { position: absolute; left: 369px; top: 367px; width: 8px; height: 12px; }
.watermark { position: absolute; left: 1534px; top: 881px; font-family: Lato, sans-serif; font-size: 32px; color: #f1f3f5; }
.subtitle { position: absolute; left: 0; right: 0; bottom: 36px; display: flex; justify-content: center; }
.subtitle span {
  background: rgba(110,110,110,.88); color: #fff; height: 48px; line-height: 39px;
  font-family: "Liberation Sans", Arial, sans-serif; font-size: 46px; white-space: nowrap;
  text-shadow: -2px -2px 0 #000, 2px -2px 0 #000, -2px 2px 0 #000, 2px 2px 0 #000, 0 2.500px 0 #000, 2.500px 0 0 #000, -2.500px 0 0 #000, 0 -2.500px 0 #000, 3px 3px 1px #111;
}

/* player */
.seek { height: 20px; flex: none; display: flex; align-items: center; background: #f0f0f0; padding: 0 7px 1px 9px; }
.time { font-size: 12px; color: #111; letter-spacing: .4px; }
.time-l { width: 50px; }
.time-r { width: 33px; margin-left: 15px; }
.track { flex: 1; height: 9px; background: #d2d2d2; border-radius: 4px; overflow: hidden; }
.fill { width: 73.150%; height: 100%; background: #2a7fd4; }
.controls { height: 32px; flex: none; background: #f0f0f0; display: flex; align-items: center; padding: 0 6px 3px 4px; gap: 14px; }
.grp { display: flex; gap: 2px; }
.btn { width: 24px; height: 23px; padding: 0; background: #e6e6e6; border: 1px solid #a8a8a8; display: flex; align-items: center; justify-content: center; }
.btn svg { width: 16px; height: 16px; fill: #707070; }
.btn-play { width: 30px; height: 29px; }
.btn-play svg { width: 20px; height: 20px; }
.volume { margin-left: auto; display: flex; align-items: flex-end; gap: 4px; align-self: flex-end; position: relative; }
.vol-ic { width: 16px; height: 16px; margin-bottom: -1px; }
.vol-bar { width: 74px; height: 24px; overflow: visible; }
.vol-text { font-family: "Open Sans", sans-serif; font-size: 13.500px; fill: #808080; }

/* taskbar */
.taskbar { height: 50px; flex: none; background: #221f20; display: flex; align-items: stretch; color: #e8e8e8; }
.sys { display: flex; align-items: center; justify-content: center; width: 60px; }
.sys svg { width: 22px; height: 22px; }
.sys-view { width: 58px; }
.apps { display: flex; margin-left: 5px; }
.app { width: 62px; display: flex; align-items: center; justify-content: center; position: relative; }
.app > svg { width: 28px; height: 28px; }
.app-on::after { content: ""; position: absolute; left: 5px; right: 6px; bottom: 0; height: 3px; background: #f5a9a9; }
.app-cur { background: #564f4f; }
.app-cur::after { left: 0; right: 0; }
.logo-txt { font-family: "Liberation Sans", sans-serif; font-weight: 700; font-size: 11px; fill: #fff; }
.logo-w { font-family: "Liberation Sans", sans-serif; font-weight: 700; font-size: 13px; fill: #fff; }
.logo-t { font-family: "Liberation Serif", serif; font-size: 17px; fill: #333; }
.tray { margin-left: auto; display: flex; align-items: center; padding-right: 11.500px; height: 100%; }
.tr { display: flex; align-items: center; justify-content: center; }
.tr-chev { width: 30px; } .tr-chev svg { width: 16px; height: 10px; }
.tr-cloud { width: 30px; } .tr-cloud svg { width: 21px; height: 14px; }
.tr-batt { width: 30px; } .tr-batt svg { width: 21px; height: 14px; }
.tr-wifi { width: 31px; } .tr-wifi svg { width: 17px; height: 15px; }
.tr-vol { width: 28px; } .tr-vol svg { width: 20px; height: 16px; }
.tr-lang { width: 48px; font-size: 13.800px; padding-right: 1.500px; }
.tr-clock { width: 84px; flex-direction: column; font-size: 13.800px; line-height: 24px; padding-right: 5px; }
.tr-notif { width: 52px; position: relative; height: 100%; }
.notif-ic { width: 20px; height: 18px; margin-right: 5px; margin-top: -5px; }
.badge { position: absolute; left: 24px; top: 25px; width: 22px; height: 22px; border-radius: 50%; border: 1px solid #aaa; background: #222; color: #eee; font-size: 12.500px; font-weight: 600; display: flex; align-items: center; justify-content: center; }
```
